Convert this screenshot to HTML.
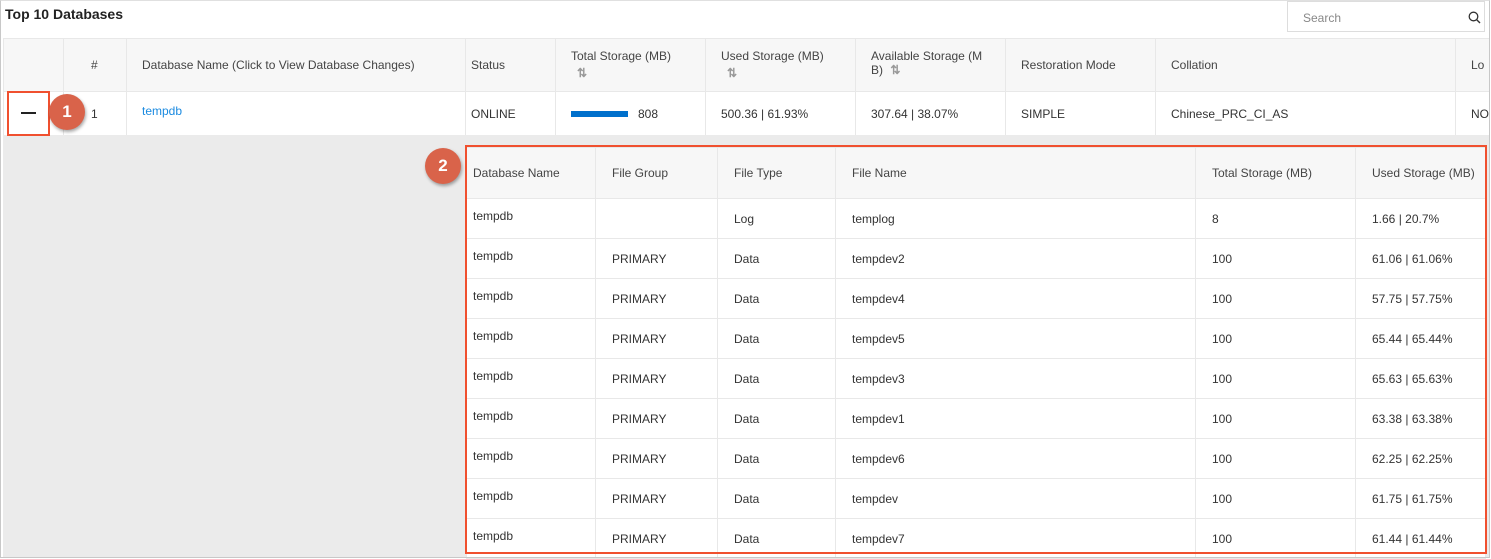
<!DOCTYPE html>
<html><head><meta charset="utf-8"><style>
*{margin:0;padding:0;box-sizing:border-box}
body{width:1491px;height:559px;background:#fff;font-family:"Liberation Sans",Arial,sans-serif;font-size:12px;color:#333;position:relative;overflow:hidden}
.frame{position:absolute;left:0;top:0;width:1490px;height:558px;border:1px solid #c8c8c8;border-top:1px solid #e0e0e0;z-index:5;pointer-events:none}
.title{position:absolute;left:5px;top:6px;font-size:14px;font-weight:bold;color:#222}
.search{position:absolute;left:1287px;top:1px;width:198px;height:31px;border:1px solid #ddd;background:#fff}
.search span{position:absolute;left:15px;top:9px;color:#888;font-size:12px}
table{border-collapse:collapse;table-layout:fixed;position:absolute}
td{border:1px solid #e8e8e8;padding:0 0 0 15px;white-space:nowrap;overflow:hidden}
.wrap{position:absolute;left:3px;top:38px;width:1486px;height:98px;overflow:hidden}
.main{left:0;top:0;width:1492px}
.main tr.h td{background:#f7f7f7;height:53px;color:#444}
.main tr.r td{background:#fff;height:44px}
.gray{position:absolute;left:3px;top:135px;width:1486px;height:422px;background:#ebebeb}
.sub{left:466px;top:147px;background:#fff}
.sub td{height:40px;padding-left:6px}
.sub tr.h td{background:#f7f7f7;height:51px;color:#444}
.sub td.n{vertical-align:top;padding-top:10px;padding-left:6px}
.sub td.p{padding-left:16px}
.red{position:absolute;border:2px solid #f0502f}
.c{position:absolute;width:36px;height:36px;border-radius:50%;background:#d9634a;color:#fff;font-weight:bold;font-size:17px;text-align:center;line-height:36px;box-shadow:1px 2px 3px rgba(0,0,0,.35)}
.sort{display:inline-block;color:#999;font-size:12px;font-weight:bold}
</style></head><body>
<div class="frame"></div>
<div class="title">Top 10 Databases</div>
<div class="search"><span>Search</span>
<svg style="position:absolute;left:180px;top:9px" width="13" height="13" viewBox="0 0 13 13"><circle cx="5.5" cy="5.5" r="4.3" fill="none" stroke="#333" stroke-width="1.3"/><path d="M8.6 8.6L12 12" stroke="#333" stroke-width="1.4"/></svg></div>
<div class="wrap">
<table class="main">
<colgroup><col style="width:60px"><col style="width:63px"><col style="width:339px"><col style="width:90px"><col style="width:150px"><col style="width:150px"><col style="width:150px"><col style="width:150px"><col style="width:300px"><col style="width:40px"></colgroup>
<tr class="h"><td></td><td style="padding-left:27px">#</td><td>Database Name (Click to View Database Changes)</td><td style="padding-left:5px">Status</td>
<td style="vertical-align:top;padding-top:10px">Total Storage (MB)<br><span class="sort" style="margin-left:6px;margin-top:3px">⇅</span></td>
<td style="vertical-align:top;padding-top:10px">Used Storage (MB)<br><span class="sort" style="margin-left:6px;margin-top:3px">⇅</span></td>
<td style="vertical-align:top;padding-top:10px">Available Storage (M<br>B) <span class="sort" style="margin-left:4px">⇅</span></td>
<td>Restoration Mode</td><td>Collation</td><td>Lo</td></tr>
<tr class="r"><td></td><td style="padding-left:27px">1</td><td style="color:#1a8ae0;vertical-align:top;padding-top:12px">tempdb</td><td style="padding-left:5px">ONLINE</td>
<td><span style="display:inline-block;width:57px;height:6px;background:#0070cc;vertical-align:middle;margin-right:10px"></span>808</td>
<td>500.36 | 61.93%</td><td>307.64 | 38.07%</td><td>SIMPLE</td><td>Chinese_PRC_CI_AS</td><td>NO</td></tr>
</table>
</div>
<div class="gray"></div>
<table class="sub">
<colgroup><col style="width:129px"><col style="width:122px"><col style="width:118px"><col style="width:360px"><col style="width:160px"><col style="width:130px"></colgroup>
<tr class="h"><td>Database Name</td><td class="p">File Group</td><td class="p">File Type</td><td class="p">File Name</td><td class="p">Total Storage (MB)</td><td class="p">Used Storage (MB)</td></tr>
<tr><td class="n">tempdb</td><td class="p"></td><td class="p">Log</td><td class="p">templog</td><td class="p">8</td><td class="p">1.66 | 20.7%</td></tr>
<tr><td class="n">tempdb</td><td class="p">PRIMARY</td><td class="p">Data</td><td class="p">tempdev2</td><td class="p">100</td><td class="p">61.06 | 61.06%</td></tr>
<tr><td class="n">tempdb</td><td class="p">PRIMARY</td><td class="p">Data</td><td class="p">tempdev4</td><td class="p">100</td><td class="p">57.75 | 57.75%</td></tr>
<tr><td class="n">tempdb</td><td class="p">PRIMARY</td><td class="p">Data</td><td class="p">tempdev5</td><td class="p">100</td><td class="p">65.44 | 65.44%</td></tr>
<tr><td class="n">tempdb</td><td class="p">PRIMARY</td><td class="p">Data</td><td class="p">tempdev3</td><td class="p">100</td><td class="p">65.63 | 65.63%</td></tr>
<tr><td class="n">tempdb</td><td class="p">PRIMARY</td><td class="p">Data</td><td class="p">tempdev1</td><td class="p">100</td><td class="p">63.38 | 63.38%</td></tr>
<tr><td class="n">tempdb</td><td class="p">PRIMARY</td><td class="p">Data</td><td class="p">tempdev6</td><td class="p">100</td><td class="p">62.25 | 62.25%</td></tr>
<tr><td class="n">tempdb</td><td class="p">PRIMARY</td><td class="p">Data</td><td class="p">tempdev</td><td class="p">100</td><td class="p">61.75 | 61.75%</td></tr>
<tr><td class="n">tempdb</td><td class="p">PRIMARY</td><td class="p">Data</td><td class="p">tempdev7</td><td class="p">100</td><td class="p">61.44 | 61.44%</td></tr>
</table>
<div class="red" style="left:465px;top:145px;width:1022px;height:409px"></div>
<div class="red" style="left:7px;top:91px;width:43px;height:45px;background:transparent"></div>
<div style="position:absolute;left:21px;top:112px;width:15px;height:2px;background:#222"></div>
<div class="c" style="left:49px;top:94px">1</div>
<div class="c" style="left:425px;top:148px">2</div>
</body></html>
